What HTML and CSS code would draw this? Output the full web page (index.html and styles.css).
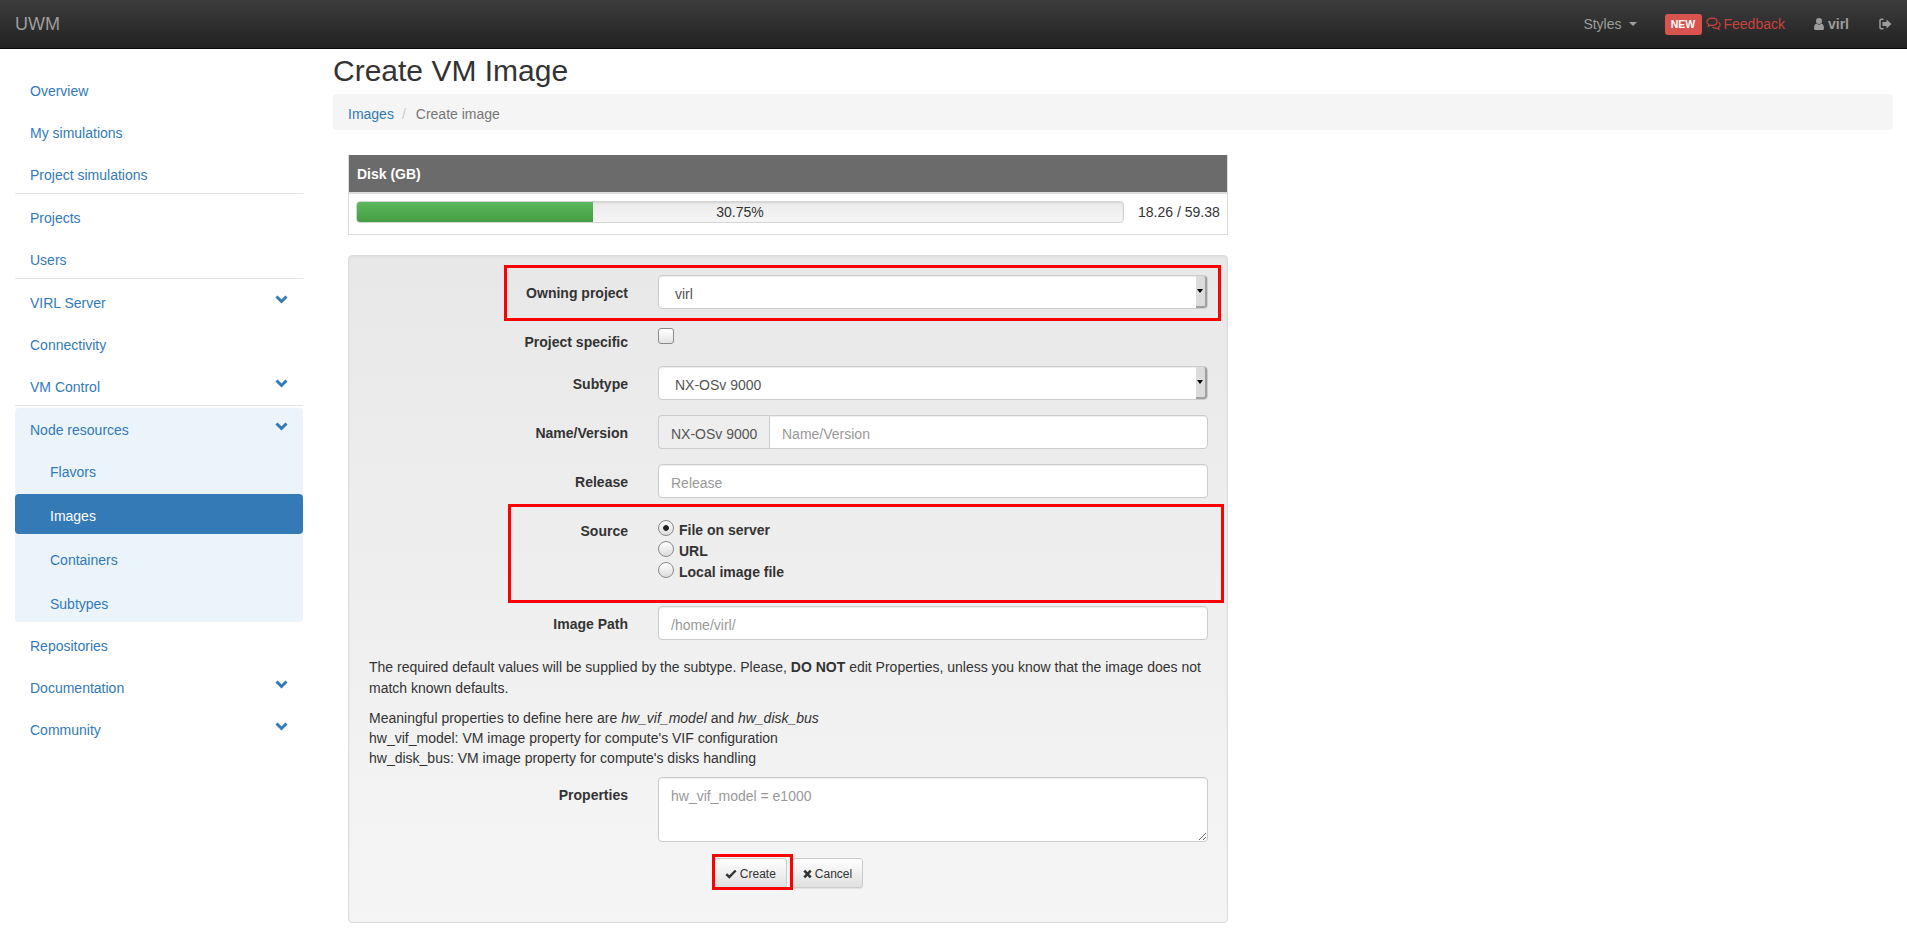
FILE: index.html
```html
<!DOCTYPE html>
<html lang="en">
<head>
<meta charset="utf-8">
<title>Create VM Image</title>
<link rel="stylesheet" href="styles.css">
</head>
<body>
<header class="navbar">
  <a class="brand">UWM</a>
  <nav class="nav-right">
    <a class="nav-styles">Styles <span class="caret"></span></a>
    <span class="badge-new">NEW</span>
    <a class="nav-feedback">
      <svg class="ico-comments" viewBox="0 0 15 14" width="15" height="14"><path d="M6 1.2C3 1.2.9 2.7.9 4.7c0 1.1.7 2.1 1.8 2.8l-.5 1.7 2-1.1c.6.1 1.2.2 1.8.2 3 0 5.100-1.600 5.100-3.600S9 1.200 6 1.200z" fill="none" stroke="currentColor" stroke-width="1.200"/><path d="M12.600 5.300c1 .6 1.600 1.500 1.600 2.500 0 1.100-.7 2-1.800 2.600l.5 1.900-2.200-1.300c-1.600.2-3.200-.2-4.200-1" fill="none" stroke="currentColor" stroke-width="1.200"/></svg>
      Feedback</a>
    <a class="nav-user">
      <svg class="ico-user" viewBox="0 0 10 12" width="10" height="12"><circle cx="5" cy="3" r="3" fill="currentColor"/><path d="M0 10.500C0 7.500 1 5.800 2.500 5.600c.6.700 1.500 1.100 2.500 1.100s1.900-.4 2.500-1.100C9 5.800 10 7.500 10 10.500 10 11.400 9.400 12 8.500 12h-7C.6 12 0 11.400 0 10.500z" fill="currentColor"/></svg>
      virl</a>
    <a class="nav-logout">
      <svg viewBox="0 0 13 12" width="13" height="12"><path d="M4.500 1.300H2.300C1.500 1.300 1 1.800 1 2.600v6.800c0 .8.500 1.300 1.300 1.300h2.200" fill="none" stroke="currentColor" stroke-width="1.500"/><path d="M7.500 1.500 12.500 6l-5 4.500V8H3.500V4h4z" fill="currentColor"/></svg>
    </a>
  </nav>
</header>

<div class="layout">
  <aside class="sidebar">
    <ul class="side-nav">
      <li><a>Overview</a></li>
      <li><a>My simulations</a></li>
      <li class="sep"><a>Project simulations</a></li>
      <li><a>Projects</a></li>
      <li class="sep"><a>Users</a></li>
      <li><a>VIRL Server<svg class="chev" viewBox="0 0 13 9" width="13" height="9"><path d="M1.500 1.500 6.500 6.500l5-5" fill="none" stroke="currentColor" stroke-width="3"/></svg></a></li>
      <li><a>Connectivity</a></li>
      <li class="sep sep-tight"><a>VM Control<svg class="chev" viewBox="0 0 13 9" width="13" height="9"><path d="M1.500 1.500 6.500 6.500l5-5" fill="none" stroke="currentColor" stroke-width="3"/></svg></a></li>
      <li class="group">
        <a>Node resources<svg class="chev" viewBox="0 0 13 9" width="13" height="9"><path d="M1.500 1.500 6.500 6.500l5-5" fill="none" stroke="currentColor" stroke-width="3"/></svg></a>
        <ul class="sub-nav">
          <li><a>Flavors</a></li>
          <li class="active"><a>Images</a></li>
          <li class="sub-shift"><a>Containers</a></li>
          <li class="sub-last"><a>Subtypes</a></li>
        </ul>
      </li>
      <li class="after-group"><a>Repositories</a></li>
      <li><a>Documentation<svg class="chev" viewBox="0 0 13 9" width="13" height="9"><path d="M1.500 1.500 6.500 6.500l5-5" fill="none" stroke="currentColor" stroke-width="3"/></svg></a></li>
      <li><a>Community<svg class="chev" viewBox="0 0 13 9" width="13" height="9"><path d="M1.500 1.500 6.500 6.500l5-5" fill="none" stroke="currentColor" stroke-width="3"/></svg></a></li>
    </ul>
  </aside>

  <main class="main">
    <h1 class="title">Create VM Image</h1>
    <div class="breadcrumb"><a>Images</a><span class="crumb-sep">/</span><span class="crumb-current">Create image</span></div>

    <div class="content">
      <section class="disk">
        <div class="disk-head">Disk (GB)</div>
        <div class="disk-body">
          <div class="progress">
            <div class="progress-fill" style="width:30.75%"></div>
            <span class="progress-label">30.75%</span>
          </div>
          <span class="disk-values">18.26 / 59.38</span>
        </div>
      </section>

      <form class="well">
        <div class="row">
          <span class="highlight hl-owner"></span>
          <label class="row-label">Owning project</label>
          <div class="select-wrap">
            <select class="control select"><option>virl</option></select>
            <span class="select-btn"></span>
          </div>
        </div>
        <div class="row row-check">
          <label class="row-label">Project specific</label>
          <div><input class="check" type="checkbox"></div>
        </div>
        <div class="row">
          <label class="row-label">Subtype</label>
          <div class="select-wrap">
            <select class="control select"><option>NX-OSv 9000</option></select>
            <span class="select-btn"></span>
          </div>
        </div>
        <div class="row">
          <label class="row-label">Name/Version</label>
          <div class="input-group">
            <span class="addon">NX-OSv 9000</span>
            <input class="control control-joined" type="text" placeholder="Name/Version">
          </div>
        </div>
        <div class="row">
          <label class="row-label">Release</label>
          <input class="control" type="text" placeholder="Release">
        </div>
        <div class="row row-source">
          <span class="highlight hl-source"></span>
          <label class="row-label">Source</label>
          <div class="radios">
            <label class="radio-line"><input class="radio" type="radio" name="source" checked>File on server</label>
            <label class="radio-line"><input class="radio" type="radio" name="source">URL</label>
            <label class="radio-line"><input class="radio" type="radio" name="source">Local image file</label>
          </div>
        </div>
        <div class="row">
          <label class="row-label">Image Path</label>
          <input class="control" type="text" placeholder="/home/virl/">
        </div>
        <p class="help help-first">The required default values will be supplied by the subtype. Please, <b>DO NOT</b> edit Properties, unless you know that the image does not match known defaults.</p>
        <p class="help">Meaningful properties to define here are <i>hw_vif_model</i> and <i>hw_disk_bus</i><br>hw_vif_model: VM image property for compute's VIF configuration<br>hw_disk_bus: VM image property for compute's disks handling</p>
        <div class="row">
          <label class="row-label">Properties</label>
          <textarea class="control area" placeholder="hw_vif_model = e1000"></textarea>
        </div>
        <div class="actions">
          <button class="btn" type="button">
            <span class="highlight hl-create"></span>
            <svg viewBox="0 0 12 10" width="12" height="10"><path d="M1.300 5.200 4.300 8 10.700 1.500" fill="none" stroke="currentColor" stroke-width="2.400"/></svg>
            Create</button>
          <button class="btn" type="button">
            <svg viewBox="0 0 9 10" width="9" height="10"><path d="M1.300 1.600 7.700 8.400M7.700 1.600 1.300 8.400" fill="none" stroke="currentColor" stroke-width="2.600"/></svg>
            Cancel</button>
        </div>
      </form>
    </div>
  </main>
</div>
</body>
</html>
```

FILE: styles.css
```css
* { box-sizing: border-box; }
html, body { margin: 0; padding: 0; }
body {
  font-family: "Liberation Sans", Arial, sans-serif;
  font-size: 14px;
  line-height: 20px;
  color: #333;
  background: #fff;
  height: 938px;
  overflow: hidden;
}
a { text-decoration: none; cursor: pointer; }
ul { list-style: none; margin: 0; padding: 0; }

/* navbar */
.navbar {
  height: 49px;
  display: flex;
  align-items: center;
  justify-content: space-between;
  padding: 0 15px;
  background: linear-gradient(to bottom, #3c3c3c, #222);
  border-bottom: 1px solid #080808;
}
.brand { font-size: 18px; color: #9d9d9d; }
.nav-right { display: flex; align-items: center; }
.nav-styles { color: #9d9d9d; display: flex; align-items: center; }
.caret {
  width: 0; height: 0;
  margin-left: 7px;
  border-top: 4px solid #9d9d9d;
  border-left: 4px solid transparent;
  border-right: 4px solid transparent;
}
.badge-new {
  margin-left: 28px;
  width: 37px;
  height: 21px;
  line-height: 20px;
  text-align: center;
  background: #d9534f;
  color: #fff;
  font-size: 10.500px;
  font-weight: bold;
  border-radius: 3px;
}
.nav-feedback { margin-left: 4px; color: #c9423e; display: flex; align-items: center; gap: 3px; }
.nav-user { margin-left: 29px; color: #9d9d9d; font-weight: bold; display: flex; align-items: center; gap: 4px; }
.nav-logout { margin-left: 30px; color: #9d9d9d; display: flex; }

/* layout */
.layout { display: flex; }
.sidebar { width: 333px; padding: 22px 30px 0 15px; flex: none; }
.side-nav > li { margin-top: 2px; }
.side-nav > li:first-child { margin-top: 0; }
.side-nav a {
  display: flex;
  justify-content: space-between;
  height: 40px;
  padding: 10px 15px;
  color: #337ab7;
  border-radius: 4px;
}
.side-nav > li.sep { margin-bottom: 4px; }
.side-nav > li.sep-tight { margin-bottom: 2px; }
.side-nav > li.sep > a { height: 39px; border-bottom: 1px solid #e5e5e5; border-radius: 0; }
.chev { margin: 2px 0 0; color: #337ab7; }
.side-nav > .group { background: #ebf4fb; border-radius: 4px; margin-top: 0; padding-top: 2px; }
.side-nav > .after-group { margin-top: 4px; }
.sub-nav > li { margin-top: 2px; }
.sub-nav a { padding-left: 35px; }
.sub-nav .active a { background: #337ab7; color: #fff; padding-top: 12px; }
.sub-nav > .sub-shift { margin-top: 6px; }
.sub-nav > .sub-last a { padding-top: 12px; }

/* main */
.main { flex: 1; padding: 5px 14px 0 0; min-width: 0; }
.title { font-size: 30px; font-weight: 400; line-height: 33px; margin: 0 0 7px; color: #333; }
.breadcrumb {
  height: 36px;
  padding: 10px 15px 6px;
  background: #f5f5f5;
  border-radius: 4px;
  color: #777;
}
.breadcrumb a { color: #337ab7; }
.crumb-sep { color: #ccc; padding: 0 10px 0 8px; }
.content { width: 895px; padding: 25px 0 0 15px; }

/* disk */
.disk { border: 1px solid #ddd; border-top: 0; width: 880px; height: 80px; }
.disk-head {
  height: 39px;
  padding: 9px 8px;
  background: #6b6b6b;
  color: #fff;
  font-weight: bold;
  border-bottom: 2px solid #ddd;
}
.disk-body { display: flex; align-items: center; padding: 7px 8px 0 7px; }
.progress {
  position: relative;
  width: 768px;
  height: 22px;
  background: linear-gradient(to bottom, #ebebeb, #f5f5f5);
  border: 1px solid #d5d5d5;
  border-radius: 4px;
  overflow: hidden;
  text-align: center;
  box-shadow: inset 0 1px 2px rgba(0,0,0,.1);
  flex: none;
}
.progress-fill {
  position: absolute;
  left: 0; top: 0; bottom: 0;
  background: linear-gradient(to bottom, #5cb85c, #449d44);
}
.progress-label { position: relative; line-height: 21px; display: block; }
.disk-values { margin-left: 14px; white-space: nowrap; }

/* well */
.well {
  margin-top: 20px;
  width: 880px;
  height: 668px;
  padding: 19px 19px 19px 20px;
  background: linear-gradient(to bottom, #e8e8e8, #f5f5f5);
  border: 1px solid #dcdcdc;
  border-radius: 4px;
  box-shadow: inset 0 1px 3px rgba(0,0,0,.05), 0 1px 0 rgba(255,255,255,.1);
}
.row {
  position: relative;
  display: grid;
  grid-template-columns: 259px 1fr;
  column-gap: 30px;
  margin-bottom: 15px;
}
.row-label { font-weight: bold; text-align: right; padding-top: 8px; align-self: start; }
.row-check { height: 27px; }
.row-source { height: 78px; }
.control {
  display: block;
  width: 100%;
  height: 34px;
  padding: 8px 12px 4px;
  font: inherit;
  line-height: 20px;
  color: #555;
  background: #fff;
  border: 1px solid #ccc;
  border-radius: 4px;
  box-shadow: inset 0 1px 1px rgba(0,0,0,.075);
  outline: none;
}
.control::placeholder { color: #999; opacity: 1; }
.select-wrap { position: relative; }
.select {
  appearance: none;
  -webkit-appearance: none;
  padding: 8px 24px 4px 16px;
}
.select-btn {
  position: absolute;
  right: 1px; top: 1px;
  width: 11px;
  height: 32px;
  background: #dcdcdc;
  border-right: 2px solid #a0a0a0;
  border-bottom: 2px solid #a0a0a0;
  border-radius: 0 3px 3px 0;
}
.select-btn::after {
  content: "";
  position: absolute;
  left: 1px; top: 13px;
  width: 0; height: 0;
  border-top: 4px solid #000;
  border-left: 3px solid transparent;
  border-right: 3px solid transparent;
}
.input-group { display: flex; }
.addon {
  flex: none;
  width: 111px;
  height: 34px;
  padding: 8px 0 0 12px;
  color: #555;
  background: #eee;
  border: 1px solid #ccc;
  border-right: 0;
  border-radius: 4px 0 0 4px;
}
.control-joined { border-radius: 0 4px 4px 0; flex: 1; }
.check {
  appearance: none;
  -webkit-appearance: none;
  display: block;
  width: 16px;
  height: 16px;
  margin: 4px 0 0 0;
  background: linear-gradient(to bottom, #fff, #e4e4e4);
  border: 1px solid #8a8a8a;
  border-radius: 3px;
}
.radios { padding-top: 6px; }
.radio-line { display: flex; align-items: center; height: 21px; font-weight: bold; }
.radio {
  appearance: none;
  -webkit-appearance: none;
  flex: none;
  align-self: flex-start;
  width: 16px;
  height: 16px;
  margin: 1px 5px 0 0;
  background: linear-gradient(to bottom, #fff, #dcdcdc);
  border: 1px solid #8a8a8a;
  border-radius: 50%;
}
.radio:checked {
  background: radial-gradient(circle at center, #222 0 2.500px, transparent 3.200px), linear-gradient(to bottom, #fff, #dcdcdc);
}
.help { margin: 0 0 9px; line-height: 20px; }
.help-first { line-height: 21px; padding-top: 2px; }
.area { height: 65px; resize: both; padding: 8px 12px; }
.actions { display: flex; justify-content: center; gap: 5px; padding-top: 1px; }
.btn {
  position: relative;
  display: flex;
  align-items: center;
  gap: 3px;
  height: 30px;
  padding: 1px 10px 0;
  font: inherit;
  font-size: 12px;
  color: #333;
  background: linear-gradient(to bottom, #fff, #e0e0e0);
  border: 1px solid #ccc;
  border-radius: 3px;
  box-shadow: inset 0 1px 0 rgba(255,255,255,.15), 0 1px 1px rgba(0,0,0,.075);
}

/* red annotation boxes */
.highlight { position: absolute; border: 3px solid #f00; pointer-events: none; z-index: 2; }
.hl-owner { left: 135px; right: -13px; top: -10px; bottom: -12px; }
.hl-source { left: 139px; right: -16px; top: -9px; bottom: -12px; }
.hl-create { left: -3px; right: -7px; top: -5px; bottom: -3px; }
```
